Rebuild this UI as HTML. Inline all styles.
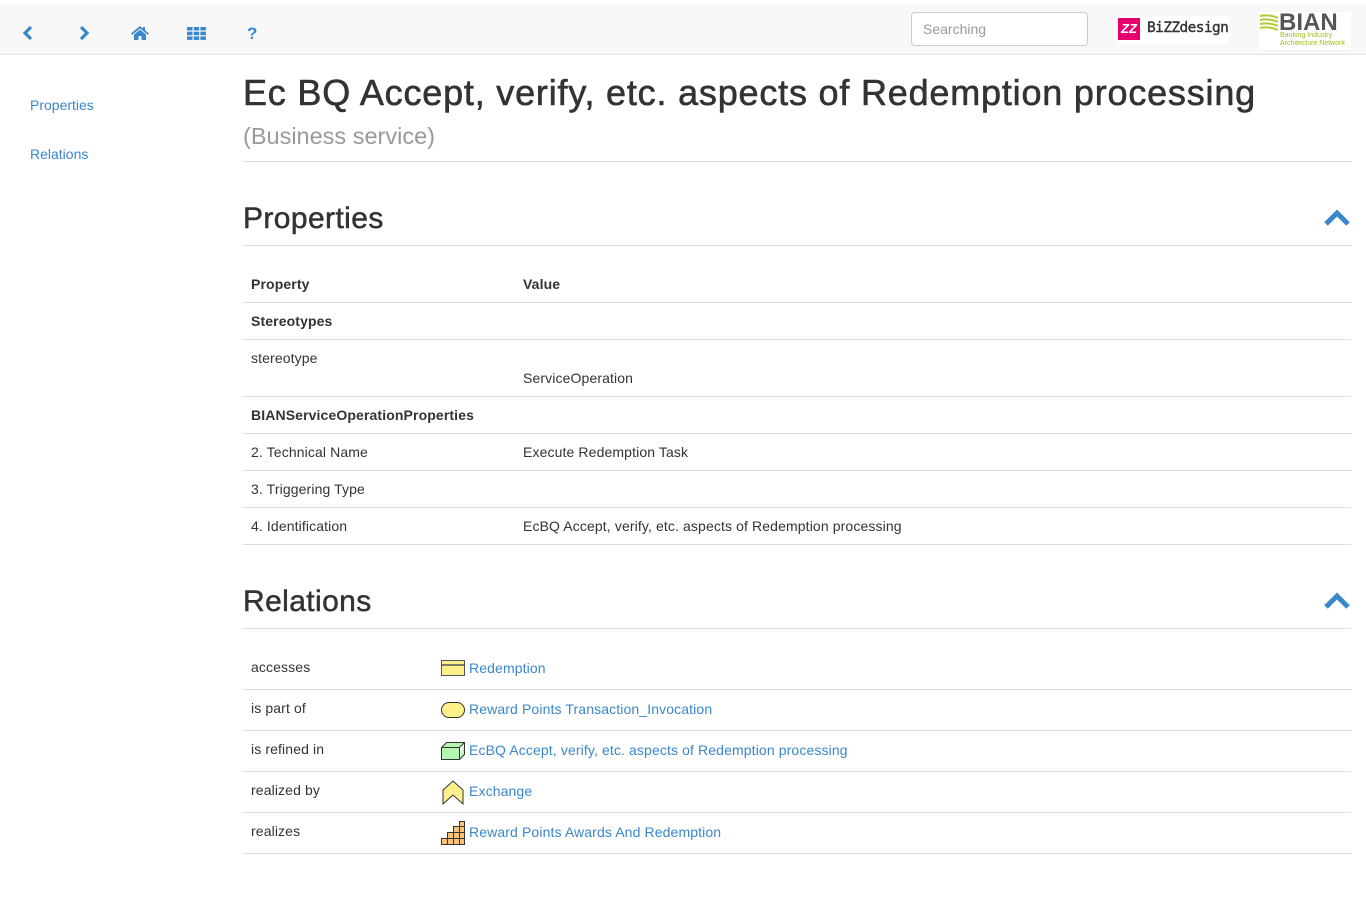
<!DOCTYPE html>
<html><head><meta charset="utf-8"><style>
*{box-sizing:border-box;margin:0;padding:0}
body{width:1366px;height:904px;background:#fff;font-family:"Liberation Sans",Arial,sans-serif;color:#333;position:relative;overflow:hidden}
.hdr{position:absolute;top:4px;left:0;width:1366px;height:51px;background:#f8f8f8;border-bottom:1px solid #e3e3e3}
.ic{position:absolute;top:24px}
.search{position:absolute;left:911px;top:8px;width:177px;height:34px;border:1px solid #ccc;border-radius:4px;background:#fff;font-size:14px;color:#999;padding:8px 11px}
a{color:#3a87cc;text-decoration:none}
.side{position:absolute;left:30px;font-size:14px;color:#3a87cc}
h1{position:absolute;left:243px;top:72px;font-size:36px;font-weight:normal;color:#333;white-space:nowrap;letter-spacing:0.8px;-webkit-text-stroke:0.6px #333}
.sub{position:absolute;left:243px;top:123px;font-size:23.5px;color:#999}
.hr{position:absolute;left:243px;width:1108px;height:1px;background:#ddd}
h2{position:absolute;left:243px;font-size:30px;font-weight:normal;color:#333;letter-spacing:0.4px;-webkit-text-stroke:0.5px #333}
.row{position:absolute;left:243px;width:1108px;border-bottom:1px solid #ddd;font-size:14px;letter-spacing:0.12px}
.row span{position:absolute}
.chev{position:absolute;left:1323px}
</style></head><body>
<div class="hdr">
<svg class="ic" style="left:22px;top:21px" width="12" height="16" viewBox="0 0 12 16"><path d="M9 2L3 8l6 6" stroke="#3a87cc" stroke-width="3.2" fill="none"/></svg>
<svg class="ic" style="left:78px;top:21px" width="12" height="16" viewBox="0 0 12 16"><path d="M3 2l6 6-6 6" stroke="#3a87cc" stroke-width="3.2" fill="none"/></svg>
<svg class="ic" style="left:131px;top:22px" width="18" height="14" viewBox="0 0 18 14"><path d="M9 0L0 7.5l1.2 1.2L9 2.5l7.8 6.2L18 7.5 14 4.3V1h-2v1.7zM3 8.5V14h4.5v-4h3v4H15V8.5L9 3.8z" fill="#3a87cc"/><rect x="12" y="1" width="2" height="3" fill="#3a87cc"/></svg>
<svg class="ic" style="left:187px;top:23px" width="19" height="13" viewBox="0 0 19 13"><g fill="#3a87cc"><rect x="0" y="0" width="5.5" height="3.5"/><rect x="6.7" y="0" width="5.5" height="3.5"/><rect x="13.4" y="0" width="5.5" height="3.5"/><rect x="0" y="4.7" width="5.5" height="3.5"/><rect x="6.7" y="4.7" width="5.5" height="3.5"/><rect x="13.4" y="4.7" width="5.5" height="3.5"/><rect x="0" y="9.4" width="5.5" height="3.5"/><rect x="6.7" y="9.4" width="5.5" height="3.5"/><rect x="13.4" y="9.4" width="5.5" height="3.5"/></g></svg>
<div style="position:absolute;left:247px;top:20px;font-size:17px;font-weight:bold;color:#3a87cc">?</div>
<div class="search">Searching</div>
<div style="position:absolute;left:1118px;top:12px;width:111px;height:28px;background:#fff"></div>
<div style="position:absolute;left:1118px;top:14px;width:22px;height:22px;background:#e6006e;color:#fff;font-size:13px;font-weight:bold;text-align:center;line-height:22px;font-style:italic">ZZ</div>
<div style="position:absolute;left:1147px;top:16px;font-family:'DejaVu Sans Mono',monospace;font-size:14.5px;color:#333;letter-spacing:-0.6px;-webkit-text-stroke:0.4px #333">BiZZdesign</div>
<div style="position:absolute;left:1259px;top:8px;width:92px;height:38px;background:#fff"></div>
<svg style="position:absolute;left:1260px;top:10px" width="18" height="18" viewBox="0 0 18 18"><g stroke="#b5c934" stroke-width="2" fill="none"><path d="M0 2q9-2 18 2"/><path d="M0 6q9-2 18 2"/><path d="M0 10q9-2 18 2"/><path d="M0 14q9-2 18 2"/></g></svg>
<div style="position:absolute;left:1279px;top:5px;font-size:24px;font-weight:bold;color:#555">BIAN</div>
<div style="position:absolute;left:1280px;top:28px;font-size:7px;line-height:8px;color:#a4b828">Banking Industry<br>Architecture Network</div>
</div>
<div class="side" style="top:97px">Properties</div>
<div class="side" style="top:146px">Relations</div>
<h1>Ec BQ Accept, verify, etc. aspects of Redemption processing</h1>
<div class="sub">(Business service)</div>
<div class="hr" style="top:161px"></div>
<h2 style="top:202px">Properties</h2>
<svg class="chev" style="top:209px" width="28" height="18" viewBox="0 0 28 18"><path d="M3 15L14 4l11 11" stroke="#3a87cc" stroke-width="5" fill="none"/></svg>
<div class="hr" style="top:245px"></div>
<div class="row" style="top:266px;height:37px"><span style="left:8px;top:10px;font-weight:bold">Property</span><span style="left:280px;top:10px;font-weight:bold">Value</span></div>
<div class="row" style="top:303px;height:37px"><span style="left:8px;top:10px;font-weight:bold">Stereotypes</span></div>
<div class="row" style="top:340px;height:57px"><span style="left:8px;top:10px">stereotype</span><span style="left:280px;top:30px">ServiceOperation</span></div>
<div class="row" style="top:397px;height:37px"><span style="left:8px;top:10px;font-weight:bold">BIANServiceOperationProperties</span></div>
<div class="row" style="top:434px;height:37px"><span style="left:8px;top:10px">2. Technical Name</span><span style="left:280px;top:10px">Execute Redemption Task</span></div>
<div class="row" style="top:471px;height:37px"><span style="left:8px;top:10px">3. Triggering Type</span></div>
<div class="row" style="top:508px;height:37px"><span style="left:8px;top:10px">4. Identification</span><span style="left:280px;top:10px">EcBQ Accept, verify, etc. aspects of Redemption processing</span></div>
<h2 style="top:585px">Relations</h2>
<svg class="chev" style="top:592px" width="28" height="18" viewBox="0 0 28 18"><path d="M3 15L14 4l11 11" stroke="#3a87cc" stroke-width="5" fill="none"/></svg>
<div class="hr" style="top:628px"></div>
<div class="row" style="top:649px;height:41px"><span style="left:8px;top:10px">accesses</span>
<svg style="position:absolute;left:198px;top:11px" width="24" height="16"><rect x="0.5" y="0.5" width="23" height="15" fill="#fdf08a" stroke="#555"/><line x1="0" y1="5" x2="24" y2="5" stroke="#555" stroke-width="1.5"/></svg>
<span style="left:226px;top:11px"><a>Redemption</a></span></div>
<div class="row" style="top:690px;height:41px"><span style="left:8px;top:10px">is part of</span>
<svg style="position:absolute;left:198px;top:12px" width="24" height="16"><rect x="0.5" y="0.5" width="23" height="15" rx="7.5" fill="#fdf08a" stroke="#333"/></svg>
<span style="left:226px;top:11px"><a>Reward Points Transaction_Invocation</a></span></div>
<div class="row" style="top:731px;height:41px"><span style="left:8px;top:10px">is refined in</span>
<svg style="position:absolute;left:198px;top:11px" width="24" height="18"><path d="M0.5 5.5h18v12h-18zM0.5 5.5l5-5h18l-5 5M18.5 17.5l5-5v-12" fill="#b3f7b0" stroke="#333"/></svg>
<span style="left:226px;top:11px"><a>EcBQ Accept, verify, etc. aspects of Redemption processing</a></span></div>
<div class="row" style="top:772px;height:41px"><span style="left:8px;top:10px">realized by</span>
<svg style="position:absolute;left:199px;top:8px" width="22" height="25"><path d="M1 10L11 1l10 9v14l-10-9-10 9z" fill="#fdf08a" stroke="#333"/></svg>
<span style="left:226px;top:11px"><a>Exchange</a></span></div>
<div class="row" style="top:813px;height:41px"><span style="left:8px;top:10px">realizes</span>
<svg style="position:absolute;left:198px;top:8px" width="24" height="24"><g fill="#fcc27a" stroke="#333"><path d="M0.5 23.5v-6h6v-6h6v-6h6v-5h5v23z"/><path d="M6.5 17.5h17M12.5 11.5h11M18.5 5.5h5M6.5 17.5v6M12.5 11.5v12M18.5 5.5v18" fill="none"/></g></svg>
<span style="left:226px;top:11px"><a>Reward Points Awards And Redemption</a></span></div>
</body></html>
